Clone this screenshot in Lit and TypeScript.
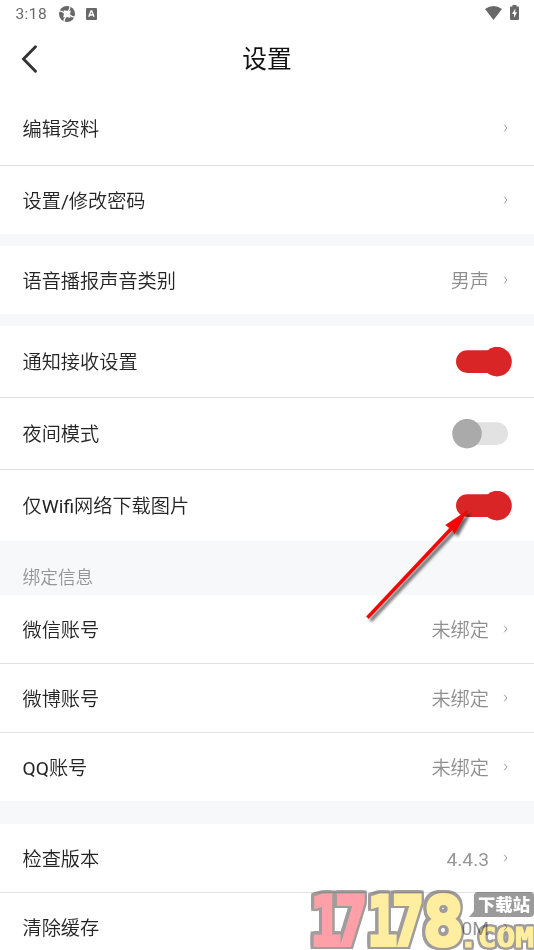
import { LitElement, html, css, svg, nothing } from "lit";
import { customElement, property } from "lit/decorators.js";

@customElement("setting-switch")
class SettingSwitch extends LitElement {
  @property({ type: Boolean, reflect: true }) on = false;

  static styles = css`
    :host { display: block; width: 60px; height: 30px; }
    svg { display: block; }
    .track { fill: #e2e2e2; }
    .thumb { fill: #aaaaaa; }
    :host([on]) .track, :host([on]) .thumb { fill: #d92525; }
  `;

  render() {
    return html`<svg width="60" height="30" viewBox="0 0 60 30">
      <rect class="track" x="4" y="3.3" width="52" height="22.6" rx="11.3"></rect>
      <circle class="thumb" cx=${this.on ? 45 : 15} cy="14.6" r="14.8"></circle>
    </svg>`;
  }
}

@customElement("setting-row")
class SettingRow extends LitElement {
  @property() label = "";
  @property() value = "";
  @property() toggle = "";

  static styles = css`
    :host {
      display: flex;
      flex: none;
      box-sizing: border-box;
      height: 68px;
      align-items: center;
      padding: 0 22px 0 22.5px;
      background: #fff;
      color: #242424;
      font-size: 19.2px;
      font-weight: 350;
      line-height: 28px;
    }
    .label { flex: 1; padding-top: 3px; }
    .value { color: #8f8f8f; margin-right: 14px; padding-top: 3px; }
    .latin { font-weight: 400; }
    .value .latin { color: #979797; }
    .chevron { display: block; margin-right: 3px; }
  `;

  /* Latin runs take the regular weight, Chinese runs the lighter one. */
  private runs(text: string) {
    return text
      .split(/([\x20-\x7e]+)/)
      .filter(Boolean)
      .map((run) => (/^[\x20-\x7e]/.test(run) ? html`<span class="latin">${run}</span>` : run));
  }

  render() {
    return html`
      <span class="label">${this.runs(this.label)}</span>
      ${this.value ? html`<span class="value">${this.runs(this.value)}</span>` : nothing}
      ${this.toggle
        ? html`<setting-switch ?on=${this.toggle === "on"}></setting-switch>`
        : html`<svg class="chevron" width="6" height="9" viewBox="0 0 6 9">
            <path d="M1.2 .7 L4 4 L1.2 7.3" fill="none" stroke="#9a9a9a" stroke-width="1"></path>
          </svg>`}
    `;
  }
}

@customElement("app-root")
class AppRoot extends LitElement {
  static styles = css`
    :host {
      display: flex;
      flex-direction: column;
      position: relative;
      height: 950px;
      overflow: hidden;
      background: #fff;
      font-family: Roboto, "Noto Sans CJK SC", sans-serif;
    }
    .status {
      display: flex;
      flex: none;
      align-items: center;
      height: 28px;
      padding: 0 15px;
      color: #686868;
      font-size: 15.5px;
      letter-spacing: 0.4px;
    }
    .time { width: 43px; padding-left: 0.5px; box-sizing: border-box; }
    .status svg { display: block; }
    .notice { margin-left: 10px; }
    .wifi { margin-left: auto; margin-bottom: 2px; }
    .battery { margin-left: 8px; margin-bottom: 3px; }
    .header {
      display: grid;
      grid-template-columns: 60px 1fr 60px;
      flex: none;
      align-items: center;
      height: 63px;
    }
    .back { display: block; margin: 0 0 2px 20px; }
    .title {
      margin: 0;
      padding-top: 1px;
      text-align: center;
      color: #111;
      font-size: 24.7px;
      font-weight: 400;
      line-height: 36px;
    }
    .group { display: flex; flex: none; flex-direction: column; }
    .line { border-bottom: 1px solid #e2e2e2; height: 69px; }
    .first { height: 75px; }
    .tall { height: 72px; }
    .last { height: 71px; }
    .gap { flex: none; height: 12px; background: #f7f8fa; }
    .wide { height: 23px; }
    .section {
      display: flex;
      flex: none;
      align-items: flex-end;
      box-sizing: border-box;
      height: 54px;
      padding: 0 22.5px 3px;
      background: #f7f8fa;
      color: #959595;
      font-size: 17.7px;
      font-weight: 350;
      line-height: 27px;
    }
    .pointer { position: absolute; left: 350px; top: 490px; }
    .watermark { position: absolute; left: 304px; top: 882px; mix-blend-mode: multiply; }
    .digits, .domain {
      font-family: "DejaVu Sans Mono", monospace;
      font-weight: 700;
      stroke-linejoin: miter;
    }
    .digits { stroke-width: 4; }
    .domain { stroke-width: 1; }
    .numerals {
      filter: drop-shadow(2.5px 0 0 #9f9c9b) drop-shadow(-2.5px 0 0 #9f9c9b)
        drop-shadow(0 2.5px 0 #9f9c9b) drop-shadow(0 -2.5px 0 #9f9c9b);
    }
    .suffix {
      filter: drop-shadow(2px 0 0 #9f9c9b) drop-shadow(-2px 0 0 #9f9c9b)
        drop-shadow(0 2px 0 #9f9c9b) drop-shadow(0 -2px 0 #9f9c9b);
    }
    .badge-text {
      font-family: "Noto Sans CJK SC", sans-serif;
      font-weight: 900;
      font-size: 17px;
      fill: #fff;
    }
    .pink { fill: #ffa0a8; stroke: #ffa0a8; }
    .yellow { fill: #ffeea0; stroke: #ffeea0; }
  `;

  private digit(char: string, tone: string, x: number, width: number) {
    return svg`<text class="digits ${tone}" font-size="68" transform="translate(${x} 62.5)"
      textLength=${width} lengthAdjust="spacingAndGlyphs">${char}</text>`;
  }

  render() {
    return html`
      <div class="status">
        <span class="time">3:18</span>
        <svg width="18" height="18" viewBox="-9 -9 18 18">
          <circle r="8" fill="#686868"></circle>
          <path d="M-3.5 -3.8 L1.2 -2.9 L3.8 -3.5 L2.9 1.2 L3.5 3.8 L-1.2 2.9 L-3.8 3.5 L-2.9 -1.2Z" fill="#fff"></path>
          ${[0, 90, 180, 270].map(
            (a) => svg`<path transform="rotate(${a})" d="M1 -2.8 Q3 -4.5 3.2 -8.5" fill="none" stroke="#fff" stroke-width="1.3"></path>`
          )}
        </svg>
        <svg class="notice" width="11" height="12" viewBox="0 0 11 12">
          <rect width="11" height="12" rx="1" fill="#686868"></rect>
          <path d="M2.8 8.8 L5 3 H5.8 L8 8.8 M3.8 7 H7" fill="none" stroke="#fff" stroke-width="1.4"></path>
        </svg>
        <svg class="wifi" width="17" height="14" viewBox="0 0 17 14">
          <path d="M0 3 Q8.5 -3 17 3 L8.5 14Z" fill="#686868"></path>
        </svg>
        <svg class="battery" width="9" height="15" viewBox="0 0 9 15">
          <path d="M0 2.5 Q0 1.5 1 1.5 H2.5 V0 H6.5 V1.5 H8 Q9 1.5 9 2.5 V14 Q9 15 8 15 H1 Q0 15 0 14Z" fill="#686868"></path>
          <path d="M5.3 3.5 L2 9 H4 V12.7 L7 7.3 H5.2Z" fill="#fff"></path>
        </svg>
      </div>
      <div class="header">
        <svg class="back" width="20" height="30" viewBox="0 0 20 30">
          <path d="M15.5 2.7 L3.5 15 L15.5 27.3" fill="none" stroke="#333" stroke-width="2.9" stroke-linecap="round"></path>
        </svg>
        <h1 class="title">设置</h1>
      </div>
      <div class="group">
        <setting-row class="line first" label="编辑资料"></setting-row>
        <setting-row label="设置/修改密码"></setting-row>
      </div>
      <div class="gap"></div>
      <setting-row label="语音播报声音类别" value="男声"></setting-row>
      <div class="gap"></div>
      <div class="group">
        <setting-row class="line tall" label="通知接收设置" toggle="on"></setting-row>
        <setting-row class="line tall" label="夜间模式" toggle="off"></setting-row>
        <setting-row class="last" label="仅Wifi网络下载图片" toggle="on"></setting-row>
      </div>
      <div class="section">绑定信息</div>
      <div class="group">
        <setting-row class="line" label="微信账号" value="未绑定"></setting-row>
        <setting-row class="line" label="微博账号" value="未绑定"></setting-row>
        <setting-row label="QQ账号" value="未绑定"></setting-row>
      </div>
      <div class="gap wide"></div>
      <div class="group">
        <setting-row class="line" label="检查版本" value="4.4.3"></setting-row>
        <setting-row label="清除缓存" value="0M"></setting-row>
      </div>

      <svg class="pointer" width="130" height="140" viewBox="350 490 130 140">
        <defs>
          <filter id="shade" x="-20%" y="-20%" width="150%" height="150%">
            <feDropShadow dx="3" dy="3" stdDeviation="1.8" flood-color="#000" flood-opacity="0.6"></feDropShadow>
          </filter>
        </defs>
        <g filter="url(#shade)" fill="#f00">
          <path d="M366.3 616.5 L449.5 528 L445.5 525 L468 510 L454.5 534 L452.3 530 L368.7 618.7Z"
            stroke="#b01010" stroke-width="0.3"></path>
        </g>
      </svg>

      <svg class="watermark" width="230" height="68" viewBox="0 0 230 68">
        <g class="numerals">
          ${this.digit("1", "pink", 6.5, 31)}
          ${this.digit("7", "pink", 31, 32)}
          ${this.digit("1", "yellow", 63.5, 30)}
          ${this.digit("7", "yellow", 88, 32)}
          ${this.digit("8", "yellow", 119, 41)}
        </g>
        <g class="suffix">
          <text class="domain yellow" x="155" y="64.5" font-size="26" textLength="75" lengthAdjust="spacingAndGlyphs">.COM</text>
        </g>
        <path d="M174 10 H226 Q230 10 230 14 V31 Q230 35 226 35 H165 L170 29 V14 Q170 10 174 10Z" fill="#9b9b9b"></path>
        <text class="badge-text" x="174" y="28.5" textLength="52" lengthAdjust="spacingAndGlyphs">下载站</text>
      </svg>
    `;
  }
}
